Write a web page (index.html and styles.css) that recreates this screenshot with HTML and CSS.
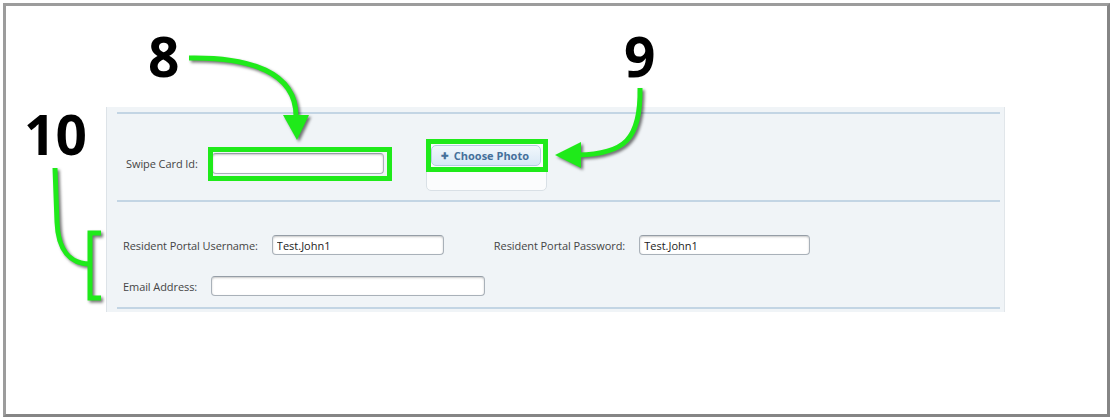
FILE: index.html
```html
<!DOCTYPE html>
<html lang="en">
<head>
  <meta charset="UTF-8">
  <title>Resident details</title>
  <link rel="stylesheet" href="styles.css">
</head>
<body>
  <div class="frame">
    <div class="panel">
      <div class="rule"></div>

      <div class="section section-card">
        <label class="label label-swipe">Swipe Card Id:</label>
        <input class="field field-swipe" type="text">
        <div class="photo">
          <button class="btn-photo"><span class="plus">✚</span>Choose Photo</button>
        </div>
      </div>

      <div class="rule"></div>

      <div class="section section-portal">
        <div class="row">
          <label class="label">Resident Portal Username:</label>
          <input class="field field-user" type="text" value="Test.John1">
          <label class="label label-pass">Resident Portal Password:</label>
          <input class="field field-pass" type="text" value="Test.John1">
        </div>
        <div class="row">
          <label class="label">Email Address:</label>
          <input class="field field-email" type="text">
        </div>
      </div>

      <div class="rule"></div>
    </div>
  </div>

  <!-- callouts drawn over the form -->
  <svg class="callouts" width="1112" height="418" viewBox="0 0 1112 418">
    <text class="num" x="148" y="77">8</text>
    <text class="num" x="624" y="77">9</text>
    <text class="num" x="24" y="155">10</text>

    <g class="ink">
      <rect x="210.5" y="149.5" width="179" height="29"></rect>
      <rect x="428.5" y="141.5" width="117" height="28"></rect>
    </g>

    <g class="ink shadowed">
      <path d="M189 58 C 250 57, 296 72, 296 116"></path>
      <polygon points="283,115 309,115 297,140"></polygon>

      <path d="M640 88 C 641 140, 624 154, 578 155"></path>
      <polygon points="555,155 581,142 581,168"></polygon>

      <path d="M55 168 L57 222 C 58 250, 70 264, 90 264"></path>
      <path d="M101 233 L90 233 L90 298 L101 298"></path>
    </g>
  </svg>
</body>
</html>
```

FILE: styles.css
```css
* {
  box-sizing: border-box;
}
body {
  margin: 0;
  position: relative;
  background: #fff;
  font-family: 'Open Sans', 'Liberation Sans', sans-serif;
  font-size: 11px;
  color: #454545;
}
.frame {
  margin: 3px 2px 0 3px;
  width: 1107px;
  height: 414px;
  border: 3px solid #9c9c9c;
  border-right-color: #858585;
  border-bottom-color: #858585;
  background: #fff;
  padding: 101px 0 0 100px;
}
.panel {
  width: 899px;
  height: 205px;
  background: #f0f4f7;
  border-left: 1px solid #dde3e8;
  border-right: 1px solid #e1e6ea;
  padding: 5px 4px 0 10px;
}
.rule {
  height: 2px;
  background: #c3d5e4;
}
.section-card {
  display: flex;
  align-items: flex-start;
  gap: 14px;
  height: 86px;
  padding: 27px 0 0 9px;
}
.label {
  line-height: 15px;
  white-space: nowrap;
  letter-spacing: -0.08px;
}
.label-swipe {
  margin-top: 15px;
}
.field {
  height: 21px;
  padding: 0 4px;
  border: 1px solid #a9b1b9;
  border-top-color: #959da6;
  border-radius: 4px;
  background: #fff;
  box-shadow: inset 0 1px 2px rgba(0, 0, 0, 0.22);
  font-family: 'Open Sans', 'Liberation Sans', sans-serif;
  font-size: 11px;
  color: #222;
  outline: none;
}
.field-swipe {
  width: 172px;
  margin-top: 12px;
}
.photo {
  width: 121px;
  height: 50px;
  margin-left: 28px;
  padding: 3px 0 0 4px;
  background: #fbfcfd;
  border: 1px solid #d9e0e6;
  border-radius: 5px;
}
.btn-photo {
  display: flex;
  align-items: center;
  width: 110px;
  height: 21px;
  padding: 0 0 0 9px;
  border: 1px solid #b6cde1;
  border-radius: 5px;
  background: linear-gradient(to bottom, #f1f7fc, #d9e8f5);
  font-family: 'Open Sans', 'Liberation Sans', sans-serif;
  font-size: 11px;
  font-weight: bold;
  color: #45709b;
}
.plus {
  font-size: 9px;
  margin-right: 5px;
}
.section-portal {
  height: 105px;
  padding: 33px 0 0 6px;
}
.row {
  display: flex;
  align-items: center;
  gap: 14px;
  margin-bottom: 21px;
}
.field-user {
  width: 172px;
  height: 20px;
}
.label-pass {
  margin-left: 36px;
}
.field-pass {
  width: 171px;
  height: 20px;
}
.field-email {
  width: 274px;
  height: 20px;
}
.callouts {
  position: absolute;
  left: 0;
  top: 0;
  pointer-events: none;
}
.num {
  font-family: 'Open Sans', 'Liberation Sans', sans-serif;
  font-weight: bold;
  font-size: 55px;
  fill: #000;
}
.ink rect,
.ink path {
  fill: none;
  stroke: #1fea1a;
  stroke-width: 5;
}
.ink polygon {
  fill: #1fea1a;
}
.shadowed {
  filter: drop-shadow(2px 2px 1.5px rgba(0, 0, 0, 0.55));
}
```
